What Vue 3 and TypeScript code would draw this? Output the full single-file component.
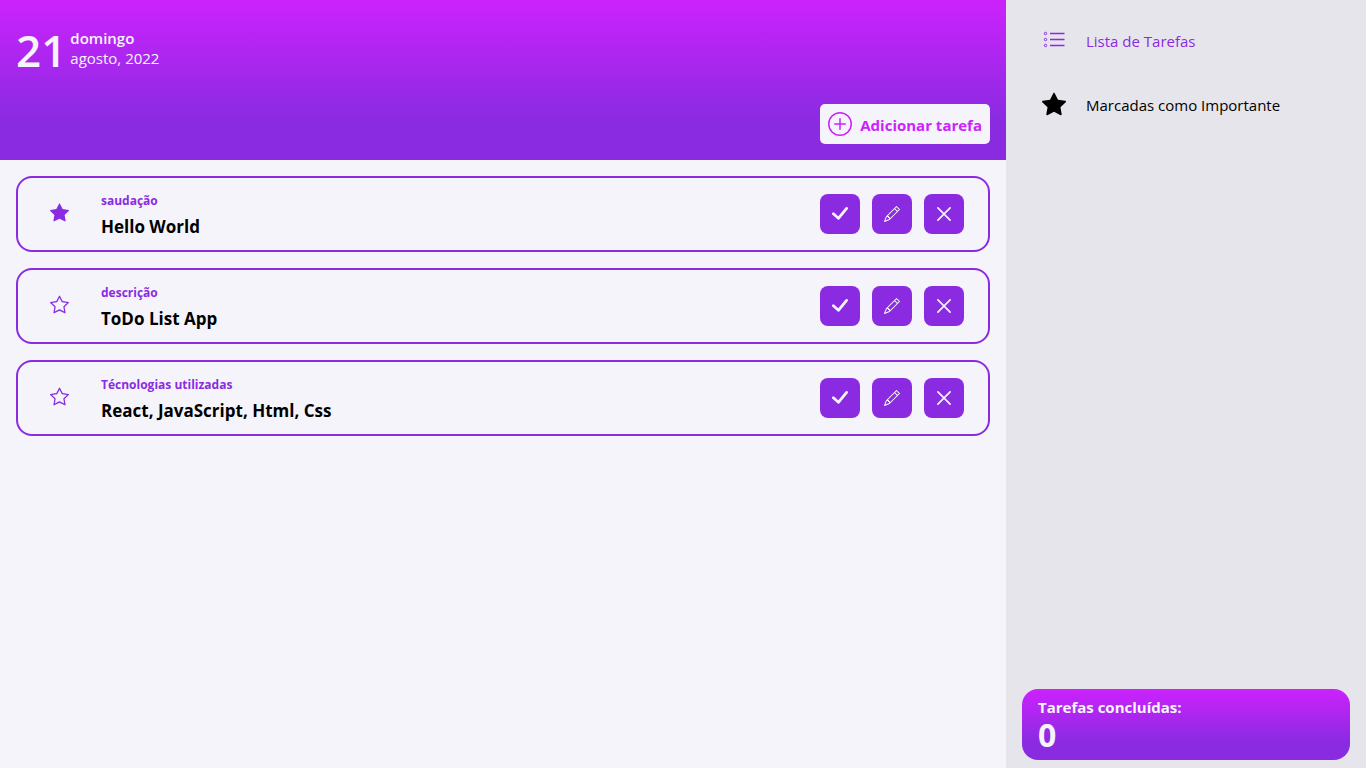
<script setup lang="ts">
import { ref, computed } from 'vue'

interface Task {
  id: number
  title: string
  text: string
  important: boolean
}

const tasks = ref<Task[]>([
  { id: 1, title: 'saudação', text: 'Hello World', important: true },
  { id: 2, title: 'descrição', text: 'ToDo List App', important: false },
  { id: 3, title: 'Técnologias utilizadas', text: 'React, JavaScript, Html, Css', important: false },
])
const done = ref(0)
const onlyImportant = ref(false)
const visible = computed(() => tasks.value.filter((t) => !onlyImportant.value || t.important))

function remove(id: number) {
  tasks.value = tasks.value.filter((t) => t.id !== id)
}
function complete(id: number) {
  remove(id)
  done.value++
}
</script>

<template>
  <div class="app">
    <main class="main">
      <header class="banner">
        <div class="date">
          <span class="day">21</span>
          <div class="date-text">
            <span class="weekday">domingo</span>
            <span>agosto, 2022</span>
          </div>
        </div>
        <button class="add" type="button">
          <svg viewBox="0 0 16 16" width="24" height="24" fill="none" stroke="currentColor" stroke-linecap="round">
            <circle cx="8" cy="8" r="7.5" />
            <path d="M8 4.5v7M4.5 8h7" />
          </svg>
          <span>Adicionar tarefa</span>
        </button>
      </header>

      <ul class="tasks">
        <li v-for="task in visible" :key="task.id" class="task">
          <button class="star" type="button" aria-label="Marcar como importante" @click="task.important = !task.important">
            <svg viewBox="0 0 16 16" width="19" height="19" fill="currentColor">
              <path v-if="task.important" d="M3.612 15.443c-.386.198-.824-.149-.746-.592l.83-4.73L.173 6.765c-.329-.314-.158-.888.283-.95l4.898-.696L7.538.792c.197-.39.73-.39.927 0l2.184 4.327 4.898.696c.441.062.612.636.282.95l-3.522 3.356.83 4.73c.078.443-.36.79-.746.592L8 13.187l-4.389 2.256z" />
              <path v-else d="M2.866 14.85c-.078.444.36.791.746.593l4.39-2.256 4.389 2.256c.386.198.824-.149.746-.592l-.83-4.73 3.522-3.356c.33-.314.16-.888-.282-.95l-4.898-.696L8.465.792a.513.513 0 0 0-.927 0L5.354 5.12l-4.898.696c-.441.062-.612.636-.283.95l3.523 3.356-.83 4.73zm4.905-2.767-3.686 1.894.694-3.957a.565.565 0 0 0-.163-.505L1.71 6.745l4.052-.576a.525.525 0 0 0 .393-.288L8 2.223l1.847 3.658a.525.525 0 0 0 .393.288l4.052.575-2.906 2.77a.565.565 0 0 0-.163.506l.694 3.957-3.686-1.894a.503.503 0 0 0-.461 0z" />
            </svg>
          </button>
          <div class="info">
            <h2>{{ task.title }}</h2>
            <p>{{ task.text }}</p>
          </div>
          <div class="actions">
            <button type="button" aria-label="Concluir" @click="complete(task.id)">
              <svg viewBox="0 0 16 16" width="16" height="16" fill="none" stroke="currentColor" stroke-width="2.8" stroke-linecap="round" stroke-linejoin="round">
                <path d="M1.400 7.800l5 4.500L14.600 2.400" />
              </svg>
            </button>
            <button type="button" aria-label="Editar">
              <svg viewBox="0 0 16 16" width="16" height="16" fill="currentColor">
                <path d="M12.146.146a.5.5 0 0 1 .708 0l3 3a.5.5 0 0 1 0 .708l-10 10a.5.5 0 0 1-.168.11l-5 2a.5.5 0 0 1-.65-.65l2-5a.5.5 0 0 1 .11-.168l10-10zM11.207 2.5 13.5 4.793 14.793 3.5 12.5 1.207 11.207 2.5zm1.586 3L10.5 3.207 4 9.707V10h.5a.5.5 0 0 1 .5.5v.5h.5a.5.5 0 0 1 .5.5v.5h.293l6.5-6.5zm-9.761 5.175-.106.106-1.528 3.821 3.821-1.528.106-.106A.5.5 0 0 1 5 12.5V12h-.5a.5.5 0 0 1-.5-.5V11h-.5a.5.5 0 0 1-.468-.325z" />
              </svg>
            </button>
            <button type="button" aria-label="Excluir" @click="remove(task.id)">
              <svg viewBox="0 0 16 16" width="16" height="16" fill="none" stroke="currentColor" stroke-width="1.7" stroke-linecap="round">
                <path d="M1.900 1.900l12.200 12.200M14.100 1.900l-12.200 12.200" />
              </svg>
            </button>
          </div>
        </li>
      </ul>
    </main>

    <aside class="side">
      <nav>
        <a href="#lista" :class="{ active: !onlyImportant }" @click.prevent="onlyImportant = false">
          <svg viewBox="0 0 24 24" width="24" height="24" fill="none" stroke="currentColor">
            <path d="M8 5.500h14.500M8 11.500h14.500M8 17.500h14.500" stroke-width="1.400" />
            <circle cx="3.500" cy="5.500" r="1.200" />
            <circle cx="3.500" cy="11.500" r="1.200" />
            <circle cx="3.500" cy="17.500" r="1.200" />
          </svg>
          <span>Lista de Tarefas</span>
        </a>
        <a href="#importantes" :class="{ active: onlyImportant }" @click.prevent="onlyImportant = true">
          <svg viewBox="0 0 16 16" width="24" height="24" fill="currentColor">
            <path d="M3.612 15.443c-.386.198-.824-.149-.746-.592l.83-4.73L.173 6.765c-.329-.314-.158-.888.283-.95l4.898-.696L7.538.792c.197-.39.73-.39.927 0l2.184 4.327 4.898.696c.441.062.612.636.282.95l-3.522 3.356.83 4.73c.078.443-.36.79-.746.592L8 13.187l-4.389 2.256z" />
          </svg>
          <span>Marcadas como Importante</span>
        </a>
      </nav>
      <section class="summary">
        <h2>Tarefas concluídas:</h2>
        <strong>{{ done }}</strong>
      </section>
    </aside>
  </div>
</template>

<style>
body {
  margin: 0;
}
</style>

<style scoped>
.app {
  display: grid;
  grid-template-columns: 1fr 360px;
  min-height: 100vh;
  background: #f5f4fb;
  color: #000;
  font: 15px/20px "Segoe UI", "Open Sans", "Noto Sans", sans-serif;
}
.app * {
  box-sizing: border-box;
}
button {
  border: 0;
  padding: 0;
  font: inherit;
  cursor: pointer;
}
svg {
  display: block;
  flex: none;
}
h2,
p {
  margin: 0;
}
.banner {
  height: 160px;
  padding: 16px;
  display: flex;
  flex-direction: column;
  justify-content: space-between;
  color: #f5f4fb;
  background: linear-gradient(#cc22fc, #8a2be2 75%);
}
.date {
  display: flex;
  align-items: center;
  gap: 4px;
  height: 68px;
}
.day {
  font-size: 44px;
  line-height: 64px;
  font-weight: 600;
}
.date-text {
  display: flex;
  flex-direction: column;
  line-height: 20px;
  padding-bottom: 4px;
}
.weekday {
  font-weight: 600;
}
.add {
  align-self: flex-end;
  display: flex;
  align-items: center;
  gap: 8px;
  height: 40px;
  padding: 0 8px;
  border-radius: 5px;
  background: #f5f4fb;
  color: #cc22fc;
  font-weight: 700;
}
.add span,
nav span {
  padding-top: 2px;
}
.tasks {
  list-style: none;
  margin: 0;
  padding: 16px;
  display: grid;
  gap: 16px;
}
.task {
  display: flex;
  align-items: center;
  height: 76px;
  padding: 0 24px 0 32px;
  border: 2px solid #8a2be2;
  border-radius: 16px;
}
.star {
  padding-bottom: 3px;
  background: none;
  color: #8a2be2;
}
.info {
  flex: 1;
  margin-left: 32px;
  padding-top: 6px;
}
.info h2 {
  font-size: 12px;
  line-height: 20px;
  font-weight: 700;
  color: #8a2be2;
}
.info p {
  font-size: 17px;
  line-height: 32px;
  font-weight: 700;
}
.actions {
  display: flex;
  gap: 12px;
}
.actions button {
  width: 40px;
  height: 40px;
  display: grid;
  place-items: center;
  border-radius: 8px;
  background: #8a2be2;
  color: #f5f4fb;
}
.side {
  display: flex;
  flex-direction: column;
  justify-content: space-between;
  padding: 8px 16px;
  background: #e6e5eb;
}
nav a {
  display: flex;
  align-items: center;
  gap: 20px;
  height: 64px;
  padding: 0 20px;
  color: #000;
  text-decoration: none;
}
nav a.active {
  color: #8a2be2;
}
.summary {
  height: 71px;
  padding: 8px 16px;
  border-radius: 16px;
  color: #f5f4fb;
  background: linear-gradient(#cc22fc, #8a2be2 75%);
}
.summary h2 {
  font-size: 15px;
  line-height: 20px;
  font-weight: 700;
}
.summary strong {
  display: block;
  font-size: 32px;
  line-height: 36px;
}
</style>
